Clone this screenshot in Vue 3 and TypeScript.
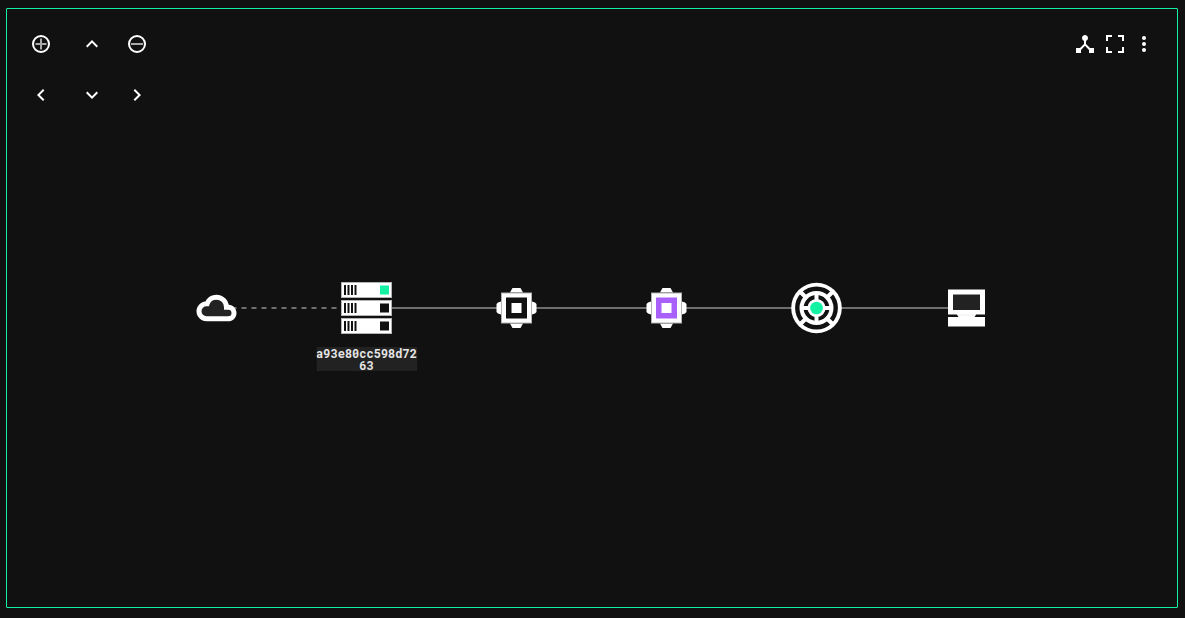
<script setup lang="ts">
type NodeKind = 'cloud' | 'server' | 'chip' | 'router' | 'computer'

interface TopologyNode {
  id: number
  kind: NodeKind
  core?: string
  label?: string
}

interface Control {
  name: string
  path: string
}

const spacing = 150
const half = 25.5
const midY = 100

const nodes: TopologyNode[] = [
  { id: 0, kind: 'cloud' },
  { id: 1, kind: 'server', label: 'a93e80cc598d7263' },
  { id: 2, kind: 'chip', core: '#111111' },
  { id: 3, kind: 'chip', core: '#a960fa' },
  { id: 4, kind: 'router' },
  { id: 5, kind: 'computer' },
]

const centerX = (index: number): number => index * spacing + half

const links = nodes.slice(1).map((node, i) => ({
  id: node.id,
  from: centerX(i + 1),
  to: centerX(i),
  dashed: i === 0,
}))

const pan: Record<string, Control> = {
  up: { name: 'Pan up', path: 'M12 8l-6 6 1.41 1.41L12 10.83l4.59 4.58L18 14z' },
  left: { name: 'Pan left', path: 'M15.41 7.41L14 6l-6 6 6 6 1.41-1.41L10.83 12z' },
  down: { name: 'Pan down', path: 'M16.59 8.59L12 13.17 7.41 8.59 6 10l6 6 6-6z' },
  right: { name: 'Pan right', path: 'M10 6L8.59 7.41 13.17 12l-4.58 4.59L10 18l6-6z' },
}
</script>

<template>
  <main class="panel">
    <nav class="pad" aria-label="View navigation">
      <button type="button" aria-label="Zoom in">
        <svg viewBox="0 0 24 24">
          <circle class="ring" cx="12" cy="12" r="8" />
          <path class="sign" d="M6.5 12h11M12 6.5v11" />
        </svg>
      </button>
      <button type="button" :aria-label="pan.up.name">
        <svg viewBox="0 0 24 24"><path :d="pan.up.path" /></svg>
      </button>
      <button type="button" aria-label="Zoom out">
        <svg viewBox="0 0 24 24">
          <circle class="ring" cx="12" cy="12" r="8" />
          <path class="sign" d="M6 12h12" />
        </svg>
      </button>
      <button v-for="key in ['left', 'down', 'right']" :key="key" type="button" :aria-label="pan[key].name">
        <svg viewBox="0 0 24 24"><path :d="pan[key].path" /></svg>
      </button>
    </nav>

    <div class="tools">
      <button type="button" aria-label="Layout">
        <svg viewBox="0 0 24 24">
          <path d="M17 16l-4-4V8.82C14.16 8.4 15 7.3 15 6c0-1.66-1.34-3-3-3S9 4.34 9 6c0 1.3.84 2.4 2 2.82V12l-4 4H3v5h5v-3.05l4-4.2 4 4.2V21h5v-5h-4z" />
        </svg>
      </button>
      <button type="button" aria-label="Full screen">
        <svg viewBox="0 0 24 24">
          <path d="M3 3h6v2H5v4H3zM15 3h6v6h-2V5h-4zM3 15h2v4h4v2H3zM19 15h2v6h-6v-2h4z" />
        </svg>
      </button>
      <button type="button" class="more" aria-label="More options">
        <svg viewBox="1 0 22 24">
          <circle cx="12" cy="6" r="2" /><circle cx="12" cy="12" r="2" /><circle cx="12" cy="18" r="2" />
        </svg>
      </button>
    </div>

    <svg class="graph" viewBox="0 0 802 200" role="img" aria-label="Network topology">
      <line
        v-for="link in links"
        :key="link.id"
        class="link"
        :class="{ dashed: link.dashed }"
        :x1="link.from"
        :x2="link.to"
        :y1="midY"
        :y2="midY"
      />

      <g v-for="(node, i) in nodes" :key="node.id" :transform="`translate(${centerX(i)} ${midY})`">
        <g v-if="node.kind === 'cloud'" transform="scale(1.667) translate(-12 -12)">
          <path class="white" d="M19.35 10.04C18.67 6.59 15.64 4 12 4 9.11 4 6.6 5.64 5.35 8.04 2.34 8.36 0 10.91 0 14c0 3.31 2.69 6 6 6h13c2.76 0 5-2.24 5-5 0-2.64-2.05-4.78-4.65-4.96z" />
          <path class="cloud-core" d="M19 18H6c-2.21 0-4-1.79-4-4s1.79-4 4-4h.71C7.37 7.69 9.48 6 12 6c3.04 0 5.5 2.46 5.5 5.5v.5H19c1.66 0 3 1.34 3 3s-1.34 3-3 3z" />
        </g>

        <g v-else-if="node.kind === 'server'">
          <g v-for="row in 3" :key="row" :transform="`translate(0 ${(row - 2) * 18})`">
            <rect class="white edged" x="-25" y="-7.5" width="50" height="15" />
            <path class="dark" d="M-22.5 -5h2v10h-2zM-19 -5h2v10h-2zM-15.5 -5h2v10h-2zM-12 -5h2v10h-2z" />
            <rect :class="row === 1 ? 'green' : 'dark'" x="13.5" y="-4.5" width="9" height="9" />
          </g>
        </g>

        <g v-else-if="node.kind === 'chip'">
          <path class="white" d="M-4 -20H4L6.5 -15.5H-6.5zM-4 20H4L6.5 15.5H-6.5zM-18.5 -5.5L-20 -4V4L-18.5 5.5L-15.5 6.5V-6.5zM18.5 -5.5L20 -4V4L18.5 5.5L15.5 6.5V-6.5z" />
          <rect class="white edged" x="-15" y="-15" width="30" height="30" />
          <rect :fill="node.core" x="-10.5" y="-10.5" width="21" height="21" />
          <rect class="white" x="-5" y="-5" width="10" height="10" />
        </g>

        <g v-else-if="node.kind === 'router'">
          <circle class="white" r="25.3" />
          <circle class="groove" r="19.2" stroke-width="4.4" />
          <path class="spoke" d="M-16 -16L16 16M16 -16L-16 16" />
          <circle class="white" r="14" />
          <circle class="groove" r="11" stroke-width="3.8" />
          <path class="spoke" d="M-14 0H14M0 -14V14" />
          <circle class="green" r="6.3" />
        </g>

        <g v-else>
          <rect class="white" x="-18.5" y="-18.5" width="37" height="37" />
          <rect class="screen" x="-13.5" y="-13.5" width="27" height="15.5" />
          <path class="dark" d="M-18.5 6.5H-9.5L-8 9H-18.5zM18.5 6.5H9.5L8 9H18.5z" />
          <rect class="neck" x="-9" y="6.5" width="18" height="1" />
        </g>

        <foreignObject v-if="node.label" x="-50.5" y="39" width="101" height="24">
          <div class="label">{{ node.label }}</div>
        </foreignObject>
      </g>
    </svg>
  </main>
</template>

<style>
body {
  margin: 0;
  background: #111111;
}
</style>

<style scoped>
.panel {
  position: relative;
  display: flex;
  align-items: center;
  justify-content: center;
  box-sizing: border-box;
  height: calc(100vh - 18px);
  min-height: 300px;
  margin: 8px 7px 10px 6px;
  border: 1px solid #13f1a3;
  border-radius: 1px;
  background: #111111;
  overflow: hidden;
}

.pad {
  position: absolute;
  top: 23px;
  left: 22px;
  display: grid;
  grid-template-columns: 51px 45px 24px;
  row-gap: 27px;
}

.tools {
  position: absolute;
  top: 23px;
  right: 22px;
  display: flex;
  gap: 6px;
}

button {
  width: 24px;
  height: 24px;
  padding: 0;
  border: 0;
  background: none;
  color: #ffffff;
  cursor: pointer;
}

button svg {
  display: block;
  width: 100%;
  height: 24px;
  fill: currentColor;
}

.more {
  width: 22px;
}

button .ring {
  fill: none;
  stroke: currentColor;
  stroke-width: 2;
}

button .sign {
  fill: none;
  stroke: #a9a9a9;
  stroke-width: 2;
}

.graph {
  flex: none;
  width: 802px;
  height: 200px;
}

.link {
  stroke: #6e6e6e;
  stroke-width: 2;
}

.dashed {
  stroke-dasharray: 5 5;
}

.white {
  fill: #ffffff;
}

.edged {
  stroke: #b4b4b4;
  stroke-width: 1;
}

.dark {
  fill: #111111;
}

.green {
  fill: #13f1a3;
}

.screen {
  fill: #222222;
}

.neck {
  fill: #eeeeee;
}

.cloud-core {
  fill: #222222;
  stroke: #ffffff;
  stroke-width: 2;
}

.groove {
  fill: none;
  stroke: #111111;
}

.spoke {
  stroke: #ffffff;
  stroke-width: 4;
}

.label {
  min-height: 24px;
  background: #222222;
  color: #e6e6e6;
  font: bold 12px/12px "Roboto Mono", "DejaVu Sans Mono", "Liberation Mono", monospace;
  text-align: center;
  word-break: break-all;
}
</style>
